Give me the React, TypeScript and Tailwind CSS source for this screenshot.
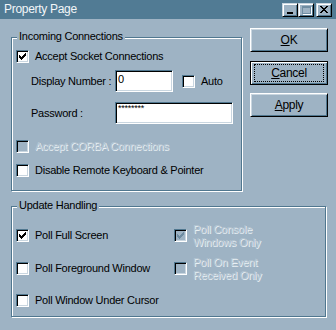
const FACE = "bg-[#9eb3c4]";

function Check({ checked = false, disabled = false }: { checked?: boolean; disabled?: boolean }) {
  return (
    <span
      className={`flex h-[13px] w-[13px] shrink-0 items-center justify-center border border-t-[#50778f] border-l-[#50778f] border-r-white border-b-white shadow-[inset_1px_1px_0_#000,inset_-1px_-1px_0_#c9d6e0] ${
        disabled ? "bg-[#9eb3c4]" : "bg-white"
      }`}
    >
      {checked && (
        <svg width="7" height="7" viewBox="0 0 7 7" shapeRendering="crispEdges">
          <path
            d="M6 0h1v1H6z M5 1h2v1H5z M0 2h1v1H0z M4 2h3v1H4z M0 3h2v1H0z M3 3h3v1H3z M0 4h5v1H0z M1 5h3v1H1z M2 6h1v1H2z"
            fill={disabled ? "#6f8da2" : "#000"}
          />
        </svg>
      )}
    </span>
  );
}

function CheckRow({
  label,
  checked,
  disabled
}: {
  label: React.ReactNode;
  checked?: boolean;
  disabled?: boolean;
}) {
  return (
    <div className="flex items-center gap-[6px]">
      <Check checked={checked} disabled={disabled} />
      <span
        className={`leading-[13px] ${
          disabled ? "text-[#b3c4d1] [text-shadow:1px_1px_0_#e9f0f4]" : "text-black"
        }`}
      >
        {label}
      </span>
    </div>
  );
}

function Field({ width, value, small }: { width: string; value: string; small?: boolean }) {
  return (
    <div
      className={`h-[22px] ${width} border border-t-[#50778f] border-l-[#50778f] border-r-white border-b-white bg-white px-[2px] text-black shadow-[inset_1px_1px_0_#000,inset_-1px_-1px_0_#c9d6e0] ${
        small ? "pt-[1px] text-[9px] leading-[9px]" : "pt-[2px] leading-[13px]"
      }`}
    >
      {value}
    </div>
  );
}

function PushButton({ children, focused }: { children: React.ReactNode; focused?: boolean }) {
  return (
    <div
      className={`relative flex h-[24px] w-[78px] items-center justify-center ${
        focused
          ? "border border-black shadow-[inset_1px_1px_0_#fff,inset_-1px_-1px_0_#50778f]"
          : "border border-t-white border-l-white border-r-black border-b-black shadow-[inset_1px_1px_0_#c9d6e0,inset_-1px_-1px_0_#50778f]"
      }`}
    >
      <span className="text-[12px] leading-[13px] tracking-[-0.3px] text-black">{children}</span>
      {focused && <span className="absolute inset-x-[3px] inset-y-[2px] border border-dotted border-black" />}
    </div>
  );
}

function CaptionButton({ children }: { children: React.ReactNode }) {
  return (
    <div className="relative h-[14px] w-[16px] border border-t-[#c9d6e0] border-l-[#c9d6e0] border-r-black border-b-black bg-[#9eb3c4] shadow-[inset_1px_1px_0_#fff,inset_-1px_-1px_0_#50778f]">
      {children}
    </div>
  );
}

function GroupBox({
  title,
  className,
  children
}: {
  title: string;
  className: string;
  children: React.ReactNode;
}) {
  return (
    <div
      className={`relative border border-[#50778f] shadow-[inset_1px_1px_0_#fff,1px_1px_0_#fff] ${className}`}
    >
      <span className={`absolute left-[5px] top-[-8px] px-[2px] leading-[13px] text-black ${FACE}`}>
        {title}
      </span>
      {children}
    </div>
  );
}

export default function App() {
  return (
    <div
      className={`h-[330px] w-[336px] overflow-hidden ${FACE} text-[11px] tracking-[-0.25px]`}
      style={{ fontFamily: '"Liberation Sans", Arial, sans-serif' }}
    >
      {/* title bar */}
      <div className="flex h-[19px] items-center bg-[#517b94] pl-[4px] pr-[4px]">
        <span className="text-[12px] leading-[13px] tracking-[-0.3px] text-[#f2f6f8]">Property Page</span>
        <div className="ml-auto flex items-center">
          <CaptionButton>
            <span className="absolute bottom-[2px] left-[4px] h-[2px] w-[6px] bg-black" />
          </CaptionButton>
          <CaptionButton>
            <span className="absolute left-[3px] top-[2px] h-[8px] w-[9px] border border-t-2 border-[#6f8da2] shadow-[1px_1px_0_#fff]" />
          </CaptionButton>
          <div className="ml-[2px]">
            <CaptionButton>
              <svg
                className="absolute left-[3px] top-[2px]"
                width="8"
                height="7"
                viewBox="0 0 8 7"
                shapeRendering="crispEdges"
              >
                <path
                  d="M0 0h2v1H0z M6 0h2v1H6z M1 1h2v1H1z M5 1h2v1H5z M2 2h4v1H2z M3 3h2v1H3z M2 4h4v1H2z M1 5h2v1H1z M5 5h2v1H5z M0 6h2v1H0z M6 6h2v1H6z"
                  fill="#000"
                />
              </svg>
            </CaptionButton>
          </div>
        </div>
      </div>

      {/* top row */}
      <div className="mt-[9px] flex items-start">
        <GroupBox title="Incoming Connections" className="ml-[11px] mt-[9px] h-[154px] w-[231px]">
          <div className="flex flex-col pl-[4px] pt-[12px]">
            <CheckRow label="Accept Socket Connections" checked />
            <div className="mt-[7px] flex items-center pl-[15px]">
              <span className="w-[84px] leading-[13px]">Display Number :</span>
              <Field width="w-[58px]" value="0" />
              <div className="ml-[9px]">
                <CheckRow label="Auto" />
              </div>
            </div>
            <div className="mt-[10px] flex items-center pl-[15px]">
              <span className="w-[84px] leading-[13px]">Password :</span>
              <Field width="w-[118px]" value="********" small />
            </div>
            <div className="mt-[16px]">
              <CheckRow label="Accept CORBA Connections" disabled />
            </div>
            <div className="mt-[11px]">
              <CheckRow label="Disable Remote Keyboard & Pointer" />
            </div>
          </div>
        </GroupBox>

        <div className="ml-[8px] flex flex-col">
          <PushButton>
            <span className="underline underline-offset-[1px]">O</span>K
          </PushButton>
          <div className="mt-[9px]">
            <PushButton focused>
              <span className="underline underline-offset-[1px]">C</span>ancel
            </PushButton>
          </div>
          <div className="mt-[8px]">
            <PushButton>
              <span className="underline underline-offset-[1px]">A</span>pply
            </PushButton>
          </div>
        </div>
      </div>

      {/* update handling */}
      <GroupBox title="Update Handling" className="ml-[11px] mt-[15px] h-[111px] w-[315px]">
        <div className="grid grid-cols-[158px_1fr] pl-[4px] pt-[22px]">
          <div className="flex h-[13px] items-center">
            <CheckRow label="Poll Full Screen" checked />
          </div>
          <div className="flex h-[13px] items-center">
            <CheckRow
              label={
                <>
                  Poll Console
                  <br />
                  Windows Only
                </>
              }
              checked
              disabled
            />
          </div>
          <div className="mt-[20px] flex h-[13px] items-center">
            <CheckRow label="Poll Foreground Window" />
          </div>
          <div className="mt-[20px] flex h-[13px] items-center">
            <CheckRow
              label={
                <>
                  Poll On Event
                  <br />
                  Received Only
                </>
              }
              disabled
            />
          </div>
          <div className="mt-[19px] flex h-[13px] items-center">
            <CheckRow label="Poll Window Under Cursor" />
          </div>
        </div>
      </GroupBox>
    </div>
  );
}
